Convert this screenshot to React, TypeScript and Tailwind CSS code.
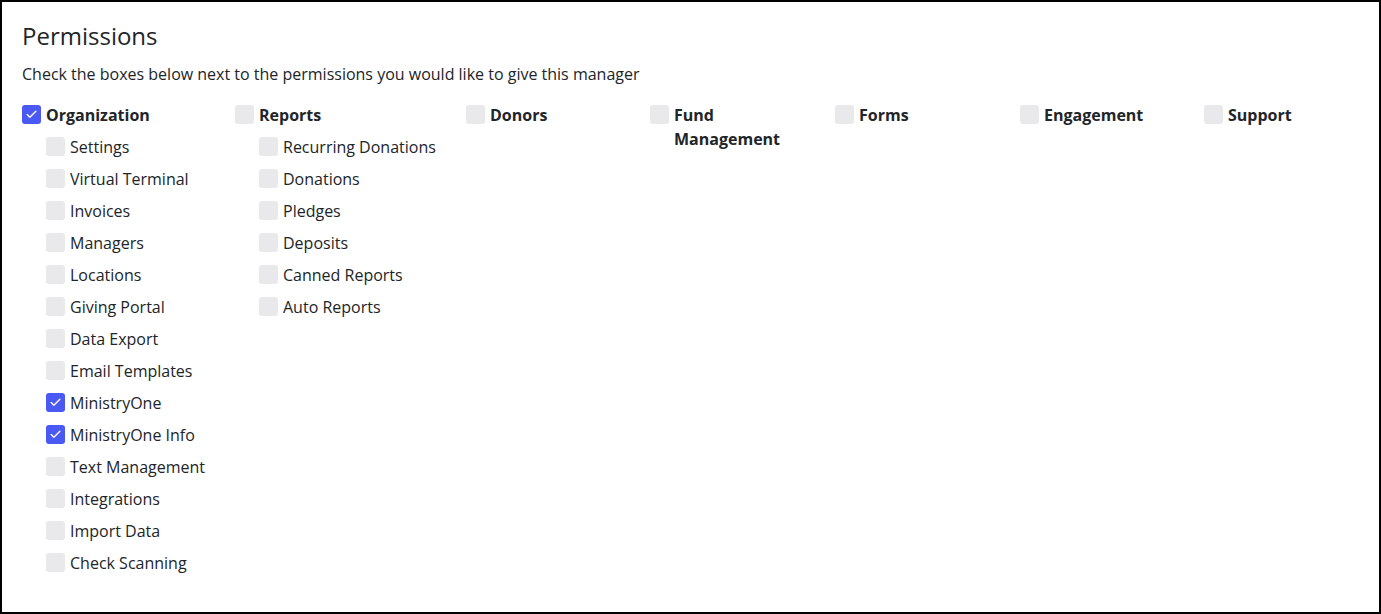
import { Check } from 'lucide-react';

type Item = { label: string; checked?: boolean };
type Group = { title: string; checked?: boolean; width: string; items: Item[] };

const GROUPS: Group[] = [
  {
    title: 'Organization',
    checked: true,
    width: 'w-[213px]',
    items: [
      { label: 'Settings' },
      { label: 'Virtual Terminal' },
      { label: 'Invoices' },
      { label: 'Managers' },
      { label: 'Locations' },
      { label: 'Giving Portal' },
      { label: 'Data Export' },
      { label: 'Email Templates' },
      { label: 'MinistryOne', checked: true },
      { label: 'MinistryOne Info', checked: true },
      { label: 'Text Management' },
      { label: 'Integrations' },
      { label: 'Import Data' },
      { label: 'Check Scanning' },
    ],
  },
  {
    title: 'Reports',
    width: 'w-[231px]',
    items: [
      { label: 'Recurring Donations' },
      { label: 'Donations' },
      { label: 'Pledges' },
      { label: 'Deposits' },
      { label: 'Canned Reports' },
      { label: 'Auto Reports' },
    ],
  },
  { title: 'Donors', width: 'w-[184px]', items: [] },
  { title: 'Fund Management', width: 'w-[185px]', items: [] },
  { title: 'Forms', width: 'w-[185px]', items: [] },
  { title: 'Engagement', width: 'w-[184px]', items: [] },
  { title: 'Support', width: 'w-[150px]', items: [] },
];

function Box({ checked }: { checked?: boolean }) {
  return (
    <span
      className={`flex items-center justify-center w-[19px] h-[19px] rounded-[3px] shrink-0 mt-[2px] ${
        checked ? 'bg-[#4a59f4]' : 'bg-[#e9e9ec]'
      }`}
    >
      {checked && <Check className="w-[13px] h-[13px] text-white" strokeWidth={2.5} />}
    </span>
  );
}

export default function App() {
  return (
    <div
      className="w-[1381px] h-[614px] bg-white border-2 border-black text-[#212529] overflow-hidden"
      style={{ fontFamily: '"Open Sans", "Noto Sans", sans-serif' }}
    >
      <div className="pl-[20px] pt-[18px]">
        <h2 className="text-[24px] leading-[32px] font-normal">Permissions</h2>
        <p className="text-[16px] leading-[24px] mt-[10px]">
          Check the boxes below next to the permissions you would like to give this manager
        </p>

        <div className="flex mt-[17px]">
          {GROUPS.map((g) => (
            <div key={g.title} className={`${g.width} shrink-0`}>
              <label className="flex items-start gap-[5px] text-[16px] leading-[24px] font-bold">
                <Box checked={g.checked} />
                <span className="w-[130px]">{g.title}</span>
              </label>
              <div className="pl-[24px] mt-[8px] flex flex-col gap-[8px]">
                {g.items.map((it) => (
                  <label key={it.label} className="flex items-start gap-[5px] text-[16px] leading-[24px] whitespace-nowrap">
                    <Box checked={it.checked} />
                    <span>{it.label}</span>
                  </label>
                ))}
              </div>
            </div>
          ))}
        </div>
      </div>
    </div>
  );
}
